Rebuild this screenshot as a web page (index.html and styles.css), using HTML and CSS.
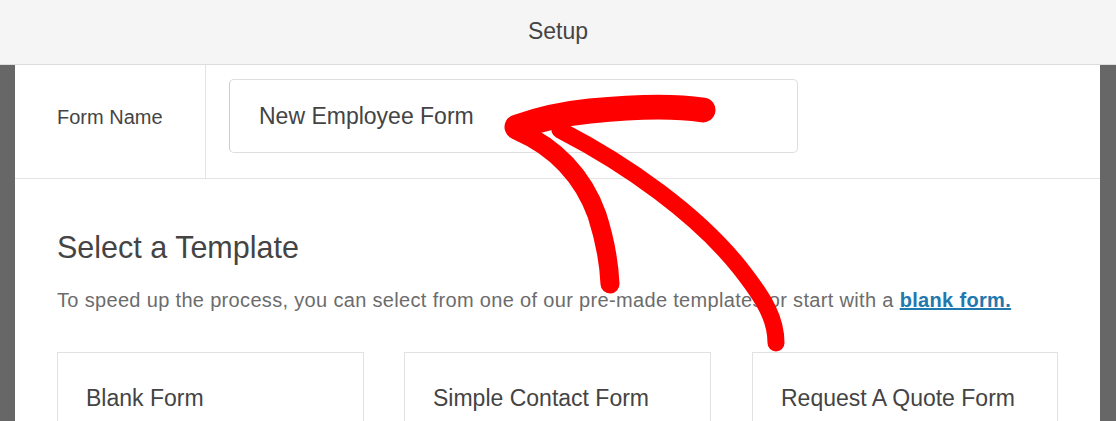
FILE: index.html
```html
<!DOCTYPE html>
<html lang="en">
<head>
    <meta charset="UTF-8">
    <meta name="viewport" content="width=device-width, initial-scale=1.0">
    <title>Setup</title>
    <link rel="stylesheet" href="styles.css">
</head>
<body>
    <div class="topbar">Setup</div>
    <div class="frame">
        <div class="panel">
            <div class="form-row">
                <label class="form-label" for="form-name">Form Name</label>
                <div class="form-field">
                    <input type="text" id="form-name" value="New Employee Form">
                </div>
            </div>
            <div class="templates">
                <h2>Select a Template</h2>
                <p>To speed up the process, you can select from one of our pre-made templates or start with a <a href="#">blank form.</a></p>
                <div class="template-grid">
                    <div class="template-card">Blank Form</div>
                    <div class="template-card">Simple Contact Form</div>
                    <div class="template-card">Request A Quote Form</div>
                </div>
            </div>
        </div>
    </div>

    <!-- hand drawn arrow pointing at the name field -->
    <svg class="arrow" width="1116" height="421" viewBox="0 0 1116 421">
        <g fill="none" stroke="#ff0000" stroke-linecap="round" stroke-linejoin="round">
            <path d="M517 127 C540 119 560 114 590 111 C630 107 670 105 703 110" stroke-width="25"/>
            <path d="M518 131 C555 147 583 176 597 215 C605 240 609 262 610 284" stroke-width="19"/>
            <path d="M560 130 C628 165 698 215 740 268 C766 301 776 320 776 343" stroke-width="17"/>
        </g>
    </svg>
</body>
</html>
```
FILE: styles.css
```css
body {
    margin: 0;
    font-family: "Liberation Sans", Arial, sans-serif;
    color: #444;
    background-color: #676767;
    height: 421px;
    overflow: hidden;
    position: relative;
}
.topbar {
    height: 64px;
    line-height: 62px;
    text-align: center;
    font-size: 23px;
    color: #444;
    background-color: #f5f5f5;
    border-bottom: 1px solid #dcdcdc;
}
.frame {
    padding: 0 16px 0 15px;
}
.panel {
    background-color: #fff;
    height: 356px;
}
.form-row {
    display: flex;
    border-bottom: 1px solid #e4e4e4;
}
.form-label {
    width: 148px;
    padding: 0 0 8px 42px;
    display: flex;
    align-items: center;
    font-size: 20px;
    border-right: 1px solid #e4e4e4;
}
.form-field {
    padding: 14px 0 25px 23px;
}
.form-field input {
    width: 569px;
    height: 74px;
    box-sizing: border-box;
    padding: 0 29px;
    border: 1px solid #dedede;
    border-left-color: #b9d2e6;
    border-radius: 5px;
    font-family: inherit;
    font-size: 23px;
    color: #444;
    outline: none;
}
.templates {
    padding: 0 42px;
}
.templates h2 {
    margin: 50px 0 0;
    font-size: 30.5px;
    font-weight: normal;
    line-height: 36px;
}
.templates p {
    margin: 23px 0 0;
    font-size: 20px;
    letter-spacing: 0.33px;
    line-height: 24px;
    color: #6c6c6c;
}
.templates a {
    color: #1f78ae;
    font-weight: bold;
}
.template-grid {
    display: grid;
    grid-template-columns: repeat(3, 307px);
    column-gap: 40px;
    margin-top: 40px;
}
.template-card {
    height: 120px;
    box-sizing: border-box;
    padding: 32px 28px;
    border: 1px solid #e2e2e2;
    font-size: 23px;
    color: #444;
}
.template-card:last-child {
    margin-left: 1px;
}
.arrow {
    position: absolute;
    top: 0;
    left: 0;
    pointer-events: none;
}
```
